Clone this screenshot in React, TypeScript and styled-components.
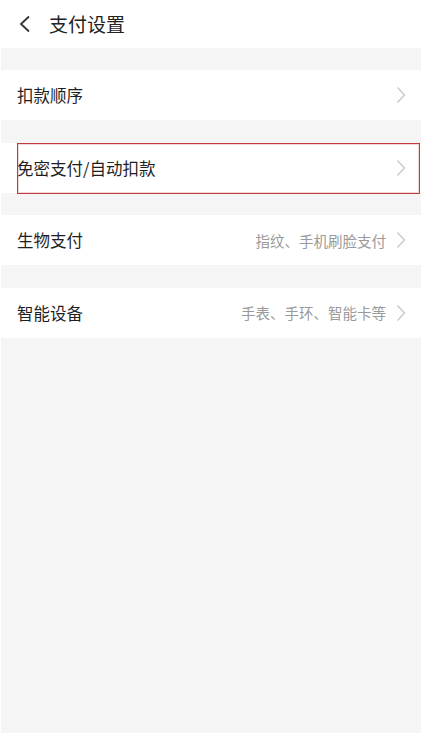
import React from "react";
import styled, { createGlobalStyle } from "styled-components";

const GlobalStyle = createGlobalStyle`
  html, body {
    margin: 0;
    padding: 0;
    background: #ffffff;
  }
  body {
    font-family: "Noto Sans CJK SC", "Noto Sans", sans-serif;
  }
`;

const Screen = styled.div`
  background-color: #f5f5f5;
  display: flex;
  flex-direction: column;
  height: 733px;
  margin-left: 1px;
  width: 420px;
`;

const Header = styled.header`
  align-items: center;
  background-color: #ffffff;
  display: flex;
  height: 47.5px;
  padding-left: 17px;
`;

const BackButton = styled.button`
  align-items: center;
  background: none;
  border: none;
  display: flex;
  height: 20px;
  margin: 0 16px 0 0;
  padding: 0;
  width: 15px;
`;

const Title = styled.h1`
  color: #222222;
  font-size: 19px;
  font-weight: 400;
  margin: 0;
`;

const Row = styled.div`
  align-items: center;
  background-color: #ffffff;
  display: flex;
  height: 50px;
  margin-top: 22.5px;
  padding: 0 15px 0 16px;
  position: relative;
`;

const Label = styled.span`
  color: #1f1f1f;
  flex: 1;
  font-size: 16.5px;
`;

const Hint = styled.span`
  color: #9a9a9a;
  font-size: 14.5px;
  margin-right: 10px;
`;

const Highlight = styled.div`
  border: 1.5px solid #c0393d;
  bottom: -1px;
  box-shadow: inset 0 0 0 1px rgba(225, 140, 140, 0.35);
  left: 16px;
  pointer-events: none;
  position: absolute;
  right: 1px;
  top: 0;
`;

const BackIcon = () => (
  <svg width="14" height="18" viewBox="0 0 14 18">
    <path d="M11 1.5 L3 9 L11 16.5" fill="none" stroke="#333" strokeWidth="1.8" />
  </svg>
);

const Chevron = () => (
  <svg width="10" height="18" viewBox="0 0 10 18">
    <path d="M1.5 1.5 L8.5 9 L1.5 16.5" fill="none" stroke="#c9c9c9" strokeWidth="1.4" />
  </svg>
);

const items = [
  { label: "扣款顺序", hint: "" },
  { label: "免密支付/自动扣款", hint: "", marked: true },
  { label: "生物支付", hint: "指纹、手机刷脸支付" },
  { label: "智能设备", hint: "手表、手环、智能卡等" },
];

const App: React.FC = () => {
  return (
    <>
      <GlobalStyle />
      <Screen>
        <Header>
          <BackButton>
            <BackIcon />
          </BackButton>
          <Title>支付设置</Title>
        </Header>
        {items.map((item) => (
          <Row key={item.label}>
            <Label>{item.label}</Label>
            {item.hint && <Hint>{item.hint}</Hint>}
            <Chevron />
            {item.marked && <Highlight />}
          </Row>
        ))}
      </Screen>
    </>
  );
};

export default App;
